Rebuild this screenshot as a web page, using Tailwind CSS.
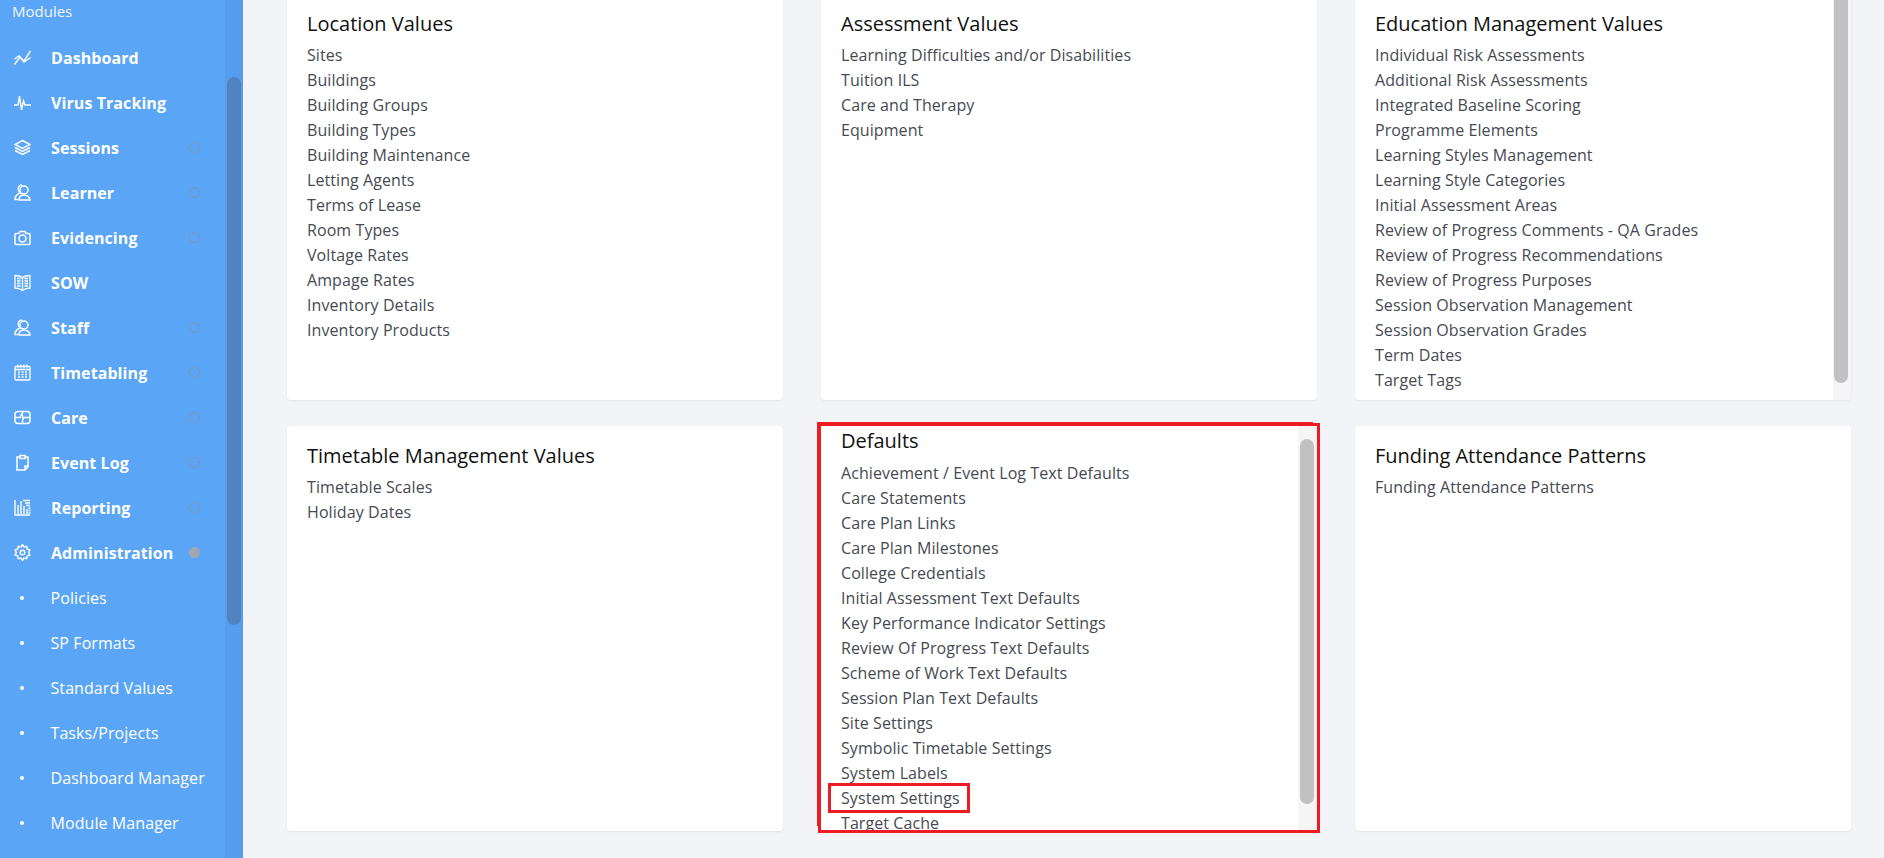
<!DOCTYPE html>
<html><head><meta charset="utf-8"><script src="https://cdn.jsdelivr.net/npm/@tailwindcss/browser@4"></script></head>
<body class="m-0 overflow-hidden bg-[#f2f4f8] font-['Open_Sans',sans-serif]">
<div class="flex h-[858px] w-[1884px] overflow-hidden">
<aside class="relative h-full w-[243px] shrink-0 bg-[#5aa5f5] text-white overflow-hidden">
  <div class="absolute right-0 top-0 h-full w-[18px] bg-[#569ded]"></div>
  <div class="absolute left-[227px] top-[77px] h-[548px] w-[14px] rounded-lg bg-[#5083bf]"></div>
  <div class="relative pl-3 pt-0 text-[15px] leading-[22px] text-white/90">Modules</div>
  <nav class="relative mt-[13px] flex flex-col text-[16px] font-bold tracking-[0.08px]">
    <div class="flex h-[45px] items-center"><svg class="ml-[14px] w-[17px] h-[17px]" viewBox="0 0 17 17" fill="none" stroke="white" stroke-width="1.400"><path d="M0.500 15.500 6 8l4 4 6.500-10M0.500 10l4.500-3 5 6 6.500-4.500"/></svg><span class="ml-5">Dashboard</span></div>
    <div class="flex h-[45px] items-center"><svg class="ml-[14px] w-[17px] h-[17px]" viewBox="0 0 17 17" fill="none" stroke="white" stroke-width="1.400"><path d="M0 11h4l1.500-9 2 14 2-9 1.500 4h6"/></svg><span class="ml-5">Virus Tracking</span></div>
    <div class="flex h-[45px] items-center"><svg class="ml-[14px] w-[17px] h-[17px]" viewBox="0 0 17 17" fill="none" stroke="white" stroke-width="1.500"><path d="M8.500 1.500 16 5.500l-7.500 4L1 5.500zM1 8.500l7.500 4 7.500-4M1 11.500l7.500 4 7.500-4"/></svg><span class="ml-5">Sessions</span><span class="absolute left-[189px] h-[11px] w-[11px] rounded-full border border-[#8594a8]"></span></div>
    <div class="flex h-[45px] items-center"><svg class="ml-[14px] w-[17px] h-[17px]" viewBox="0 0 17 17" fill="none" stroke="white" stroke-width="1.500"><circle cx="10" cy="6" r="4"/><path d="M5 16c0-3 2-5 5-5s6 2 6 5zM8 1C5 1 3.500 3.500 4.500 6.500c.5 1 1 2 1.500 2.500C3 10 1 12 1 15.500h3"/></svg><span class="ml-5">Learner</span><span class="absolute left-[189px] h-[11px] w-[11px] rounded-full border border-[#8594a8]"></span></div>
    <div class="flex h-[45px] items-center"><svg class="ml-[14px] w-[17px] h-[17px]" viewBox="0 0 17 17" fill="none" stroke="white" stroke-width="1.500"><path d="M1 5.500a1 1 0 0 1 1-1h3l1-2h5l1 2h3a1 1 0 0 1 1 1v9a1 1 0 0 1-1 1H2a1 1 0 0 1-1-1z"/><circle cx="8.500" cy="9.500" r="3.500"/></svg><span class="ml-5">Evidencing</span><span class="absolute left-[189px] h-[11px] w-[11px] rounded-full border border-[#8594a8]"></span></div>
    <div class="flex h-[45px] items-center"><svg class="ml-[14px] w-[17px] h-[17px]" viewBox="0 0 17 17" fill="none" stroke="white" stroke-width="1.300"><path d="M8.500 3.500C6 1.500 3 1.500 1 1.500v12.500c2.500 0 5 .5 7.500 2.500C11 14.500 14 14 16 14V1.500c-2 0-5 0-7.500 2zM8.500 3.500v13M3 4.500h3.500M3 7h3.500M3 9.500h3.500M3 12h3.500M10.500 4.500H14M10.500 7H14M10.500 9.500H14M10.500 12H14"/></svg><span class="ml-5">SOW</span></div>
    <div class="flex h-[45px] items-center"><svg class="ml-[14px] w-[17px] h-[17px]" viewBox="0 0 17 17" fill="none" stroke="white" stroke-width="1.500"><circle cx="10" cy="6" r="4"/><path d="M5 16c0-3 2-5 5-5s6 2 6 5zM8 1C5 1 3.500 3.500 4.500 6.500c.5 1 1 2 1.500 2.500C3 10 1 12 1 15.500h3"/></svg><span class="ml-5">Staff</span><span class="absolute left-[189px] h-[11px] w-[11px] rounded-full border border-[#8594a8]"></span></div>
    <div class="flex h-[45px] items-center"><svg class="ml-[14px] w-[17px] h-[17px]" viewBox="0 0 17 17" fill="none" stroke="white" stroke-width="1.300"><rect x="1" y="2.500" width="15" height="13.500" rx="1"/><path d="M4 0.500v3M7 0.500v3M10 0.500v3M13 0.500v3M1 5.500h15"/><path d="M4 8h9M4 10.500h9M4 13h9" stroke-width="1.600" stroke-dasharray="2 1.500"/></svg><span class="ml-5">Timetabling</span><span class="absolute left-[189px] h-[11px] w-[11px] rounded-full border border-[#8594a8]"></span></div>
    <div class="flex h-[45px] items-center"><svg class="ml-[14px] w-[17px] h-[17px]" viewBox="0 0 17 17" fill="none" stroke="white" stroke-width="1.500"><rect x="1" y="2.500" width="15" height="12" rx="3"/><path d="M1 8.500h5l2-4 1 6 1-2h6M8.500 2.500v2M8.500 11v3.500"/></svg><span class="ml-5">Care</span><span class="absolute left-[189px] h-[11px] w-[11px] rounded-full border border-[#8594a8]"></span></div>
    <div class="flex h-[45px] items-center"><svg class="ml-[14px] w-[17px] h-[17px]" viewBox="0 0 17 17" fill="none" stroke="white" stroke-width="1.500"><path d="M6 3H3v13h8l3-3V3h-3M6 1.500h5v3H6zM14 12h-3v4"/></svg><span class="ml-5">Event Log</span><span class="absolute left-[189px] h-[11px] w-[11px] rounded-full border border-[#8594a8]"></span></div>
    <div class="flex h-[45px] items-center"><svg class="ml-[14px] w-[17px] h-[17px]" viewBox="0 0 17 17" fill="none" stroke="white" stroke-width="1.400"><path d="M1 1v15h15M4 15V6M7 15V2M10 15V7M13 15V10M9 1.500h7M11 4h5M12 6.500h4M14.500 9h2M14.500 11.500h2M14.500 14h2"/></svg><span class="ml-5">Reporting</span><span class="absolute left-[189px] h-[11px] w-[11px] rounded-full border border-[#8594a8]"></span></div>
    <div class="flex h-[45px] items-center"><svg class="ml-[14px] w-[17px] h-[17px]" viewBox="1 1 22 22" fill="none" stroke="white" stroke-width="1.900"><path d="M12 2l2 2.800 3.400-.7.700 3.400 3.400 1.500-1.500 3 1.500 3-3.400 1.500-.7 3.400-3.400-.7-2 2.800-2-2.800-3.400.7-.7-3.400-3.400-1.500 1.500-3-1.500-3 3.400-1.500.7-3.400 3.400.7z"/><circle cx="12" cy="12" r="3"/></svg><span class="ml-5">Administration</span><span class="absolute left-[189px] h-[11px] w-[11px] rounded-full bg-[#a3a8b0]"></span></div>
    <div class="flex h-[45px] items-center font-normal"><span class="ml-[20px] h-1 w-1 rounded-full bg-white"></span><span class="ml-[26.500px]">Policies</span></div>
    <div class="flex h-[45px] items-center font-normal"><span class="ml-[20px] h-1 w-1 rounded-full bg-white"></span><span class="ml-[26.500px]">SP Formats</span></div>
    <div class="flex h-[45px] items-center font-normal"><span class="ml-[20px] h-1 w-1 rounded-full bg-white"></span><span class="ml-[26.500px]">Standard Values</span></div>
    <div class="flex h-[45px] items-center font-normal"><span class="ml-[20px] h-1 w-1 rounded-full bg-white"></span><span class="ml-[26.500px]">Tasks/Projects</span></div>
    <div class="flex h-[45px] items-center font-normal"><span class="ml-[20px] h-1 w-1 rounded-full bg-white"></span><span class="ml-[26.500px]">Dashboard Manager</span></div>
    <div class="flex h-[45px] items-center font-normal"><span class="ml-[20px] h-1 w-1 rounded-full bg-white"></span><span class="ml-[26.500px]">Module Manager</span></div>
  </nav>
</aside>
<main class="mt-[-6px] grid h-fit flex-1 grid-cols-[496px_496px_496px] grid-rows-[406px_405px] gap-x-[38px] gap-y-[26px] pl-[44px]">
  <section class="overflow-hidden rounded-sm bg-white px-5 pt-[15px] shadow-[0_1px_2px_rgba(0,0,0,0.08)] text-[16px] leading-[25px] tracking-[0.08px] text-[#464a52]">
    <h2 class="mb-1 text-[20px] leading-[30px] tracking-normal text-[#111]">Location Values</h2>
    <div>Sites</div><div>Buildings</div><div>Building Groups</div><div>Building Types</div><div>Building Maintenance</div><div>Letting Agents</div><div>Terms of Lease</div><div>Room Types</div><div>Voltage Rates</div><div>Ampage Rates</div><div>Inventory Details</div><div>Inventory Products</div>
  </section>
  <section class="overflow-hidden rounded-sm bg-white px-5 pt-[15px] shadow-[0_1px_2px_rgba(0,0,0,0.08)] text-[16px] leading-[25px] tracking-[0.08px] text-[#464a52]">
    <h2 class="mb-1 text-[20px] leading-[30px] tracking-normal text-[#111]">Assessment Values</h2>
    <div>Learning Difficulties and/or Disabilities</div><div>Tuition ILS</div><div>Care and Therapy</div><div>Equipment</div>
  </section>
  <section class="relative overflow-hidden rounded-sm bg-white px-5 pt-[15px] shadow-[0_1px_2px_rgba(0,0,0,0.08)] text-[16px] leading-[25px] tracking-[0.08px] text-[#464a52]">
    <h2 class="mb-1 text-[20px] leading-[30px] tracking-normal text-[#111]">Education Management Values</h2>
    <div>Individual Risk Assessments</div><div>Additional Risk Assessments</div><div>Integrated Baseline Scoring</div><div>Programme Elements</div><div>Learning Styles Management</div><div>Learning Style Categories</div><div>Initial Assessment Areas</div><div>Review of Progress Comments - QA Grades</div><div>Review of Progress Recommendations</div><div>Review of Progress Purposes</div><div>Session Observation Management</div><div>Session Observation Grades</div><div>Term Dates</div><div>Target Tags</div>
    <div class="absolute right-0 top-0 h-full w-[18px] bg-[#f5f5f5]"></div>
    <div class="absolute right-[3px] top-0 h-[389px] w-[14px] rounded-lg bg-[#c1c1c1]"></div>
  </section>
  <section class="overflow-hidden rounded-sm bg-white px-5 pt-[15px] shadow-[0_1px_2px_rgba(0,0,0,0.08)] text-[16px] leading-[25px] tracking-[0.08px] text-[#464a52]">
    <h2 class="mb-1 text-[20px] leading-[30px] tracking-normal text-[#111]">Timetable Management Values</h2>
    <div>Timetable Scales</div><div>Holiday Dates</div>
  </section>
  <section class="relative h-[404px] bg-white outline-[3px] outline-[#ed1c24] shadow-[-4px_-4px_0_0_#ed1c24] text-[16px] leading-[25px] tracking-[0.08px] text-[#464a52]">
    <div class="h-full overflow-hidden px-5">
      <h2 class="mb-[5px] text-[20px] leading-[30px] tracking-normal text-[#111]">Defaults</h2>
      <div>Achievement / Event Log Text Defaults</div><div>Care Statements</div><div>Care Plan Links</div><div>Care Plan Milestones</div><div>College Credentials</div><div>Initial Assessment Text Defaults</div><div>Key Performance Indicator Settings</div><div>Review Of Progress Text Defaults</div><div>Scheme of Work Text Defaults</div><div>Session Plan Text Defaults</div><div>Site Settings</div><div>Symbolic Timetable Settings</div><div>System Labels</div><div>System Settings</div><div>Target Cache</div>
    </div>
    <div class="absolute right-0 top-0 h-full w-[19px] bg-[#f5f5f5]"></div>
    <div class="absolute right-[3px] top-[13px] h-[365px] w-[14px] rounded-lg bg-[#c1c1c1]"></div>
    <div class="absolute left-[7px] top-[357px] h-[30px] w-[142px] border-[3px] border-[#ed1c24]"></div>
  </section>
  <section class="overflow-hidden rounded-sm bg-white px-5 pt-[15px] shadow-[0_1px_2px_rgba(0,0,0,0.08)] text-[16px] leading-[25px] tracking-[0.08px] text-[#464a52]">
    <h2 class="mb-1 text-[20px] leading-[30px] tracking-normal text-[#111]">Funding Attendance Patterns</h2>
    <div>Funding Attendance Patterns</div>
  </section>
</main>
</div>
</body></html>
